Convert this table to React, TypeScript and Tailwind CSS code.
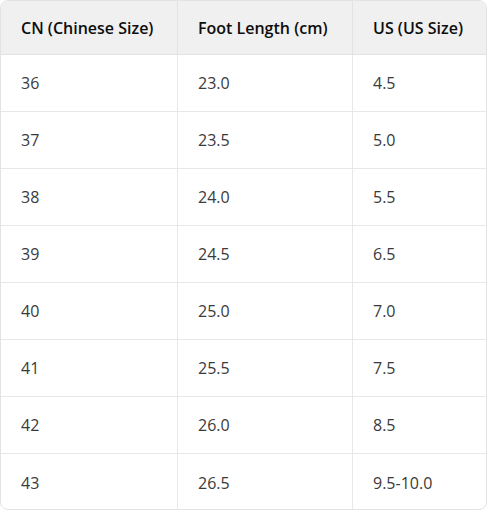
import React from "react";

const rows: [string, string, string][] = [
  ["36", "23.0", "4.5"],
  ["37", "23.5", "5.0"],
  ["38", "24.0", "5.5"],
  ["39", "24.5", "6.5"],
  ["40", "25.0", "7.0"],
  ["41", "25.5", "7.5"],
  ["42", "26.0", "8.5"],
  ["43", "26.5", "9.5-10.0"],
];

export default function App() {
  return (
    <div
      className="w-[487px] h-[510px] bg-white"
      style={{ fontFamily: '"Open Sans", "Noto Sans", Arial, sans-serif' }}
    >
      <div className="w-[487px] h-[510px] border border-[#e3e3e3] rounded-lg overflow-hidden">
        <div className="grid grid-cols-[177px_175px_1fr] h-[54px] bg-[#f0f0f0] border-b border-[#e3e3e3] text-[16px] font-semibold text-[#0d0d0d]">
          <div className="flex items-center pl-5 border-r border-[#e3e3e3]">CN (Chinese Size)</div>
          <div className="flex items-center pl-5 border-r border-[#e3e3e3]">Foot Length (cm)</div>
          <div className="flex items-center pl-5">US (US Size)</div>
        </div>
        {rows.map((r, i) => (
          <div
            key={i}
            className={`grid grid-cols-[177px_175px_1fr] h-[57px] text-[16px] text-[#3a3a3a] ${
              i < rows.length - 1 ? "border-b border-[#e8e8e8]" : ""
            }`}
          >
            <div className="flex items-center pl-5 border-r border-[#e8e8e8]">{r[0]}</div>
            <div className="flex items-center pl-5 border-r border-[#e8e8e8]">{r[1]}</div>
            <div className="flex items-center pl-5">{r[2]}</div>
          </div>
        ))}
      </div>
    </div>
  );
}
